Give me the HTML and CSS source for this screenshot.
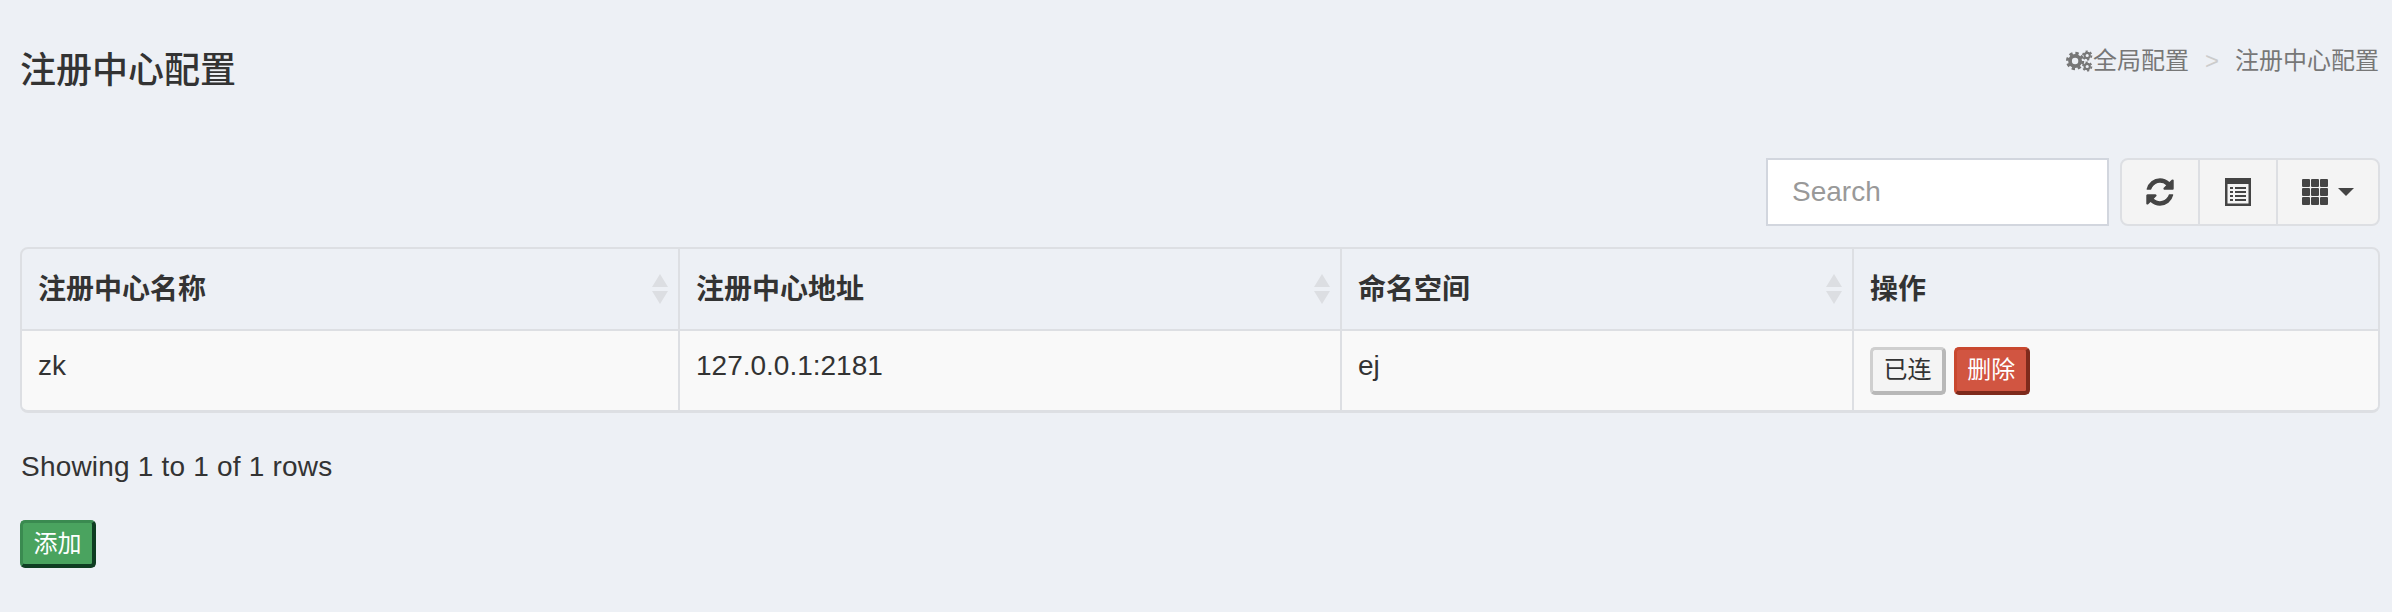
FILE: index.html
```html
<!DOCTYPE html>
<html lang="en">

<head>
    <meta charset="UTF-8">
    <title>注册中心配置</title>
    <link rel="stylesheet" href="styles.css">
</head>

<body>

    <div class="content-header">
        <h1>注册中心配置</h1>
        <ol class="breadcrumb">
            <li>
                <svg class="icon-cogs" viewBox="0 0 24 20">
                    <circle class="gear-body" cx="8" cy="10" r="4.6"></circle>
                    <circle class="gear-teeth" cx="8" cy="10" r="7"></circle>
                    <circle class="gear-body small" cx="19" cy="5" r="2.4"></circle>
                    <circle class="gear-teeth small" cx="19" cy="5" r="3.9"></circle>
                    <circle class="gear-body small" cx="19" cy="15" r="2.4"></circle>
                    <circle class="gear-teeth small" cx="19" cy="15" r="3.9"></circle>
                </svg>全局配置
            </li>
            <li class="sep">&gt;</li>
            <li>注册中心配置</li>
        </ol>
    </div>

    <div class="toolbar">
        <input class="search" type="text" placeholder="Search">
        <div class="btn-group">
            <button class="tool-btn refresh">
                <svg class="icon" viewBox="0 0 1792 1792">
                    <path d="M1639 1056q0 5-1 7-64 268-268 434.5t-478 166.5q-146 0-282.5-55t-243.5-157l-129 129q-19 19-45 19t-45-19-19-45v-448q0-26 19-45t45-19h448q26 0 45 19t19 45-19 45l-137 137q71 66 161 102t187 36q134 0 250-65t186-179q11-17 53-117 8-23 30-23h192q13 0 22.5 9.5t9.5 22.5zm25-800v448q0 26-19 45t-45 19h-448q-26 0-45-19t-19-45 19-45l138-138q-148-137-349-137-134 0-250 65t-186 179q-11 17-53 117-8 23-30 23h-199q-13 0-22.5-9.5t-9.5-22.5v-7q65-268 270-434.5t480-166.5q146 0 284 55.5t245 156.5l130-129q19-19 45-19t45 19 19 45z"></path>
                </svg>
            </button>
            <button class="tool-btn list">
                <svg class="icon" viewBox="0 0 26 28">
                    <path fill-rule="evenodd" d="M0 0h26v28H0zM2.5 6v19.500h21V6z"></path>
                    <path d="M5 9h3v2H5zM10 9h11v2H10zM5 13h3v2H5zM10 13h11v2H10zM5 17h3v2H5zM10 17h11v2H10zM5 21h3v2H5zM10 21h11v2H10z"></path>
                </svg>
            </button>
            <button class="tool-btn columns">
                <svg class="icon" viewBox="0 0 26 26">
                    <rect x="0" y="0" width="8" height="8" rx="1"></rect>
                    <rect x="9" y="0" width="8" height="8" rx="1"></rect>
                    <rect x="18" y="0" width="8" height="8" rx="1"></rect>
                    <rect x="0" y="9" width="8" height="8" rx="1"></rect>
                    <rect x="9" y="9" width="8" height="8" rx="1"></rect>
                    <rect x="18" y="9" width="8" height="8" rx="1"></rect>
                    <rect x="0" y="18" width="8" height="8" rx="1"></rect>
                    <rect x="9" y="18" width="8" height="8" rx="1"></rect>
                    <rect x="18" y="18" width="8" height="8" rx="1"></rect>
                </svg>
                <span class="caret"></span>
            </button>
        </div>
    </div>

    <div class="table-wrap">
        <table>
            <colgroup>
                <col class="col-name">
                <col class="col-addr">
                <col class="col-ns">
                <col>
            </colgroup>
            <thead>
                <tr>
                    <th>注册中心名称<svg class="sort" viewBox="0 0 16 30"><path d="M8 0l8 13H0zM0 17h16L8 30z"></path></svg></th>
                    <th>注册中心地址<svg class="sort" viewBox="0 0 16 30"><path d="M8 0l8 13H0zM0 17h16L8 30z"></path></svg></th>
                    <th>命名空间<svg class="sort" viewBox="0 0 16 30"><path d="M8 0l8 13H0zM0 17h16L8 30z"></path></svg></th>
                    <th>操作</th>
                </tr>
            </thead>
            <tbody>
                <tr>
                    <td>zk</td>
                    <td>127.0.0.1:2181</td>
                    <td>ej</td>
                    <td class="actions">
                        <button class="btn btn-default">已连</button>
                        <button class="btn btn-danger">删除</button>
                    </td>
                </tr>
            </tbody>
        </table>
    </div>

    <div class="pagination-info">Showing 1 to 1 of 1 rows</div>

    <button class="btn btn-success">添加</button>

</body>
</html>
```

FILE: styles.css
```css
* {
    box-sizing: border-box;
}

body {
    font-family: "Liberation Sans", "Noto Sans CJK SC", sans-serif;
    font-size: 28px;
    color: #333;
    background-color: #edf0f5;
    margin: 0;
    padding: 0 12px 0 20px;
}

.content-header {
    display: flex;
    justify-content: space-between;
    align-items: flex-start;
    height: 158px;
}

h1 {
    margin: 51px 0 0;
    font-size: 36px;
    line-height: 40px;
    font-weight: 500;
}

.breadcrumb {
    list-style-type: none;
    display: flex;
    gap: 16px;
    margin: 44px 1px 0 0;
    padding: 0;
    font-size: 24px;
    line-height: 34px;
    color: #777;
}

.breadcrumb li {
    display: flex;
    align-items: center;
}

.breadcrumb .sep {
    color: #ccc;
}

.icon-cogs {
    width: 27px;
    height: 22px;
}

.gear-body {
    fill: none;
    stroke: #777;
    stroke-width: 3.4;
}

.gear-body.small {
    stroke-width: 1.900;
}

.gear-teeth {
    fill: none;
    stroke: #777;
    stroke-width: 2.600;
    stroke-dasharray: 3 2.500;
}

.gear-teeth.small {
    stroke-width: 1.500;
    stroke-dasharray: 2 2.100;
}

.toolbar {
    display: flex;
    justify-content: flex-end;
    gap: 11px;
    margin-bottom: 21px;
}

.search {
    width: 343px;
    height: 68px;
    padding: 0 24px;
    border: 2px solid #d2d6de;
    background-color: #fff;
    font-family: inherit;
    font-size: 28px;
    color: #555;
    outline: none;
}

.search::placeholder {
    color: #999;
}

.btn-group {
    display: flex;
    height: 68px;
    border: 2px solid #dddfe3;
    border-radius: 8px;
    background-color: #f4f4f4;
    overflow: hidden;
}

.tool-btn {
    display: flex;
    align-items: center;
    justify-content: center;
    gap: 10px;
    padding: 0;
    border: none;
    border-right: 2px solid #dddfe3;
    background: none;
}

.tool-btn:last-child {
    border-right: none;
}

.tool-btn.refresh {
    width: 78px;
}

.tool-btn.list {
    width: 78px;
}

.tool-btn.columns {
    width: 100px;
}

.icon {
    width: 26px;
    height: 28px;
    fill: #444;
}

.refresh .icon {
    width: 32px;
    height: 32px;
}

.columns .icon {
    height: 26px;
}

.caret {
    width: 0;
    height: 0;
    border-left: 8px solid transparent;
    border-right: 8px solid transparent;
    border-top: 8px solid #444;
}

.table-wrap {
    border: 2px solid #dddfe3;
    border-bottom-width: 3px;
    border-radius: 8px;
    overflow: hidden;
}

table {
    width: 100%;
    table-layout: fixed;
    border-collapse: collapse;
}

.col-name {
    width: 657px;
}

.col-addr {
    width: 662px;
}

.col-ns {
    width: 512px;
}

th, td {
    border-left: 2px solid #dddfe3;
    padding: 0 16px;
    text-align: left;
}

th:first-child, td:first-child {
    border-left: none;
}

th {
    position: relative;
    height: 81px;
    padding-bottom: 4px;
    font-weight: bold;
    border-bottom: 2px solid #dddfe3;
}

td {
    height: 80px;
    background-color: #f9f9f9;
    padding-bottom: 9px;
}

.actions {
    padding-bottom: 0;
}

.sort {
    position: absolute;
    right: 10px;
    top: 25px;
    width: 16px;
    height: 30px;
    fill: #dcdee2;
}

.btn {
    height: 48px;
    width: 76px;
    padding: 0;
    border-radius: 5px;
    border-style: solid;
    border-width: 3px 4px 4px 3px;
    font-family: inherit;
    font-size: 24px;
    line-height: 1;
}

.btn-default {
    color: #333;
    background-color: #f4f4f4;
    border-color: #cfcfcf #b8b8b8 #b8b8b8 #cfcfcf;
}

.btn-danger {
    color: #fff;
    background-color: #d15541;
    border-color: #c9482f #7e2a1c #7e2a1c #c9482f;
}

.btn-success {
    display: block;
    color: #fff;
    background-color: #4aa35f;
    border-color: #3a8a50 #0f3d22 #0f3d22 #3a8a50;
}

.pagination-info {
    margin: 34px 0 33px 1px;
    line-height: 40px;
    letter-spacing: 0.2px;
}
```
